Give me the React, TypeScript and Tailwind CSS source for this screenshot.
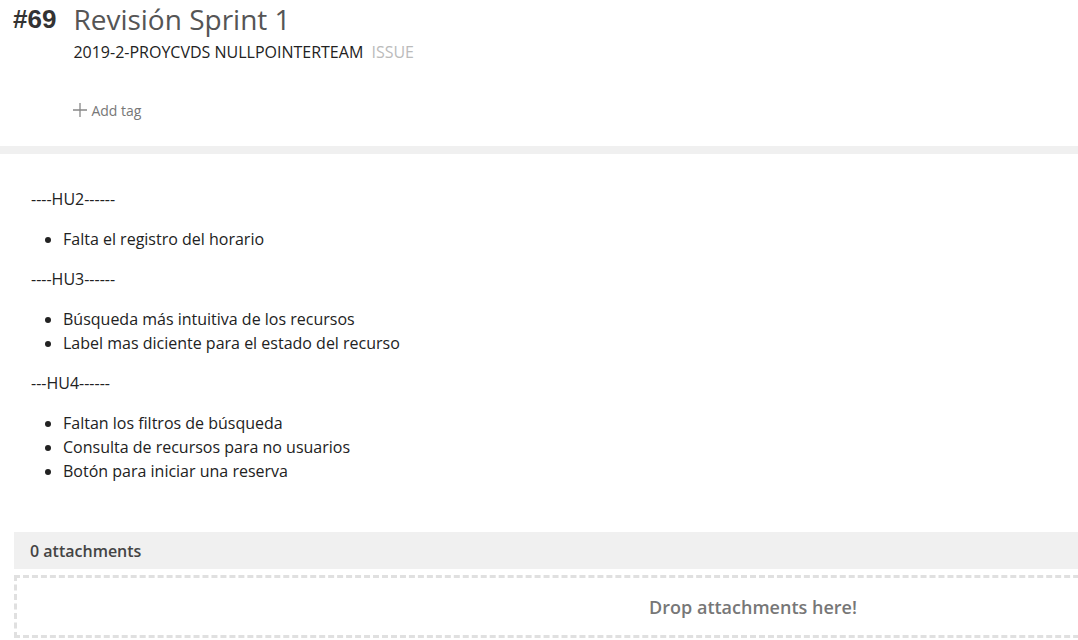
import React from "react";

export default function App() {
  return (
    <div className="w-[1078px] h-[640px] overflow-hidden bg-white" style={{ fontFamily: '"Open Sans", sans-serif' }}>
      <div className="w-[1492px]">
        {/* Header */}
        <div className="h-[146px] pl-[13px] pt-[1px] flex gap-[17px]">
          <div className="text-[26px] font-bold text-[#333] leading-[36px]" style={{ fontFamily: '"Liberation Sans", Arial, sans-serif' }}>#69</div>
          <div className="flex flex-col">
            <div className="text-[28px] text-[#555] leading-[36px] font-normal">Revisión Sprint 1</div>
            <div className="text-[16px] leading-[22px] mt-[4px] text-[#222]">
              2019-2-PROYCVDS NULLPOINTERTEAM <span className="text-[#bbb] ml-[4px]">ISSUE</span>
            </div>
            <div className="mt-[38px] flex items-center text-[14px] text-[#777] leading-[20px]">
              <svg width="16" height="16" viewBox="0 0 16 16" className="mr-[3px] -ml-[1px] -mt-[3px]">
                <path d="M8 1v14M1 8h14" stroke="#888" strokeWidth="1.3" fill="none" />
              </svg>
              Add tag
            </div>
          </div>
        </div>
        <div className="h-[8px] bg-[#f0f0f0]" />
        {/* Description */}
        <div className="pl-[31px] pt-[33px] text-[16px] leading-[24px] text-[#222]">
          <p>----HU2------</p>
          <ul className="list-disc pl-[32px] my-[16px]">
            <li>Falta el registro del horario</li>
          </ul>
          <p>----HU3------</p>
          <ul className="list-disc pl-[32px] my-[16px]">
            <li>Búsqueda más intuitiva de los recursos</li>
            <li>Label mas diciente para el estado del recurso</li>
          </ul>
          <p>---HU4------</p>
          <ul className="list-disc pl-[32px] my-[16px]">
            <li>Faltan los filtros de búsqueda</li>
            <li>Consulta de recursos para no usuarios</li>
            <li>Botón para iniciar una reserva</li>
          </ul>
        </div>
        {/* Attachments */}
        <div className="ml-[14px] mt-[49px]">
          <div className="h-[37px] bg-[#f0f0f0] flex items-center pl-[16px] text-[16px] font-semibold text-[#444]">0 attachments</div>
          <div className="mt-[6px] h-[63px] border-[3px] border-dashed border-[#e0e0e0] flex items-center justify-center pt-[2px] text-[18px] font-semibold text-[#777]">
            Drop attachments here!
          </div>
        </div>
      </div>
    </div>
  );
}
